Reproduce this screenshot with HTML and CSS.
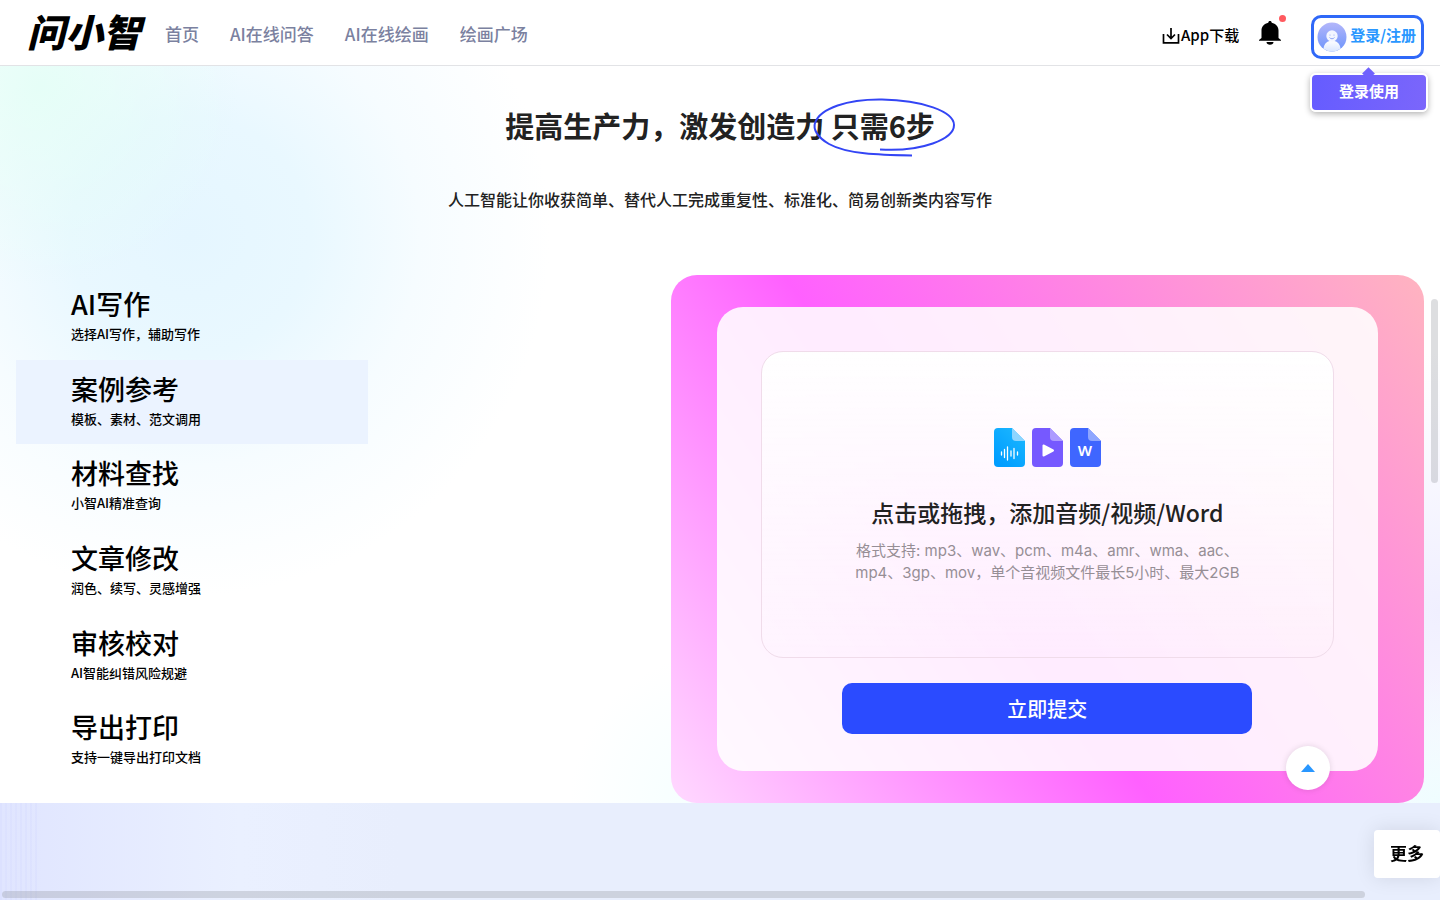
FILE: index.html
```html
<!DOCTYPE html>
<html lang="zh-CN">
<head>
  <meta charset="UTF-8" />
  <meta name="viewport" content="width=device-width, initial-scale=1.0"/>
  <title>问小智</title>
  <link rel="stylesheet" href="styles.css">
</head>
<body>
  <header class="header">
    <a class="logo" href="#">问小智</a>
    <nav class="nav">
      <a href="#">首页</a>
      <a href="#">AI在线问答</a>
      <a href="#">AI在线绘画</a>
      <a href="#">绘画广场</a>
    </nav>
    <div class="tools">
      <a class="download" href="#">
        <svg width="18" height="18" viewBox="0 0 18 18" fill="none" stroke="#000" stroke-width="1.7">
          <path d="M1.5 8v8.800h15V8M9 2v10M5 8.500l4 4 4-4"/>
        </svg>App下载
      </a>
      <button class="bell" type="button" aria-label="消息">
        <svg width="24" height="26" viewBox="0 0 24 26">
          <path d="M12 1c1 0 1.700.7 1.700 1.700 4 .8 6.800 3.800 6.800 7.800v7.500l2.500 2v.8H1V20l2.500-2v-7.500c0-4 2.800-7 6.800-7.800C10.300 1.700 11 1 12 1zM8.500 22h7c0 1.700-1.500 2.800-3.500 2.800S8.500 23.700 8.500 22z"/>
        </svg>
        <span class="dot"></span>
      </button>
      <div class="account">
        <button class="login" type="button">
          <svg width="30" height="30" viewBox="0 0 30 30">
            <defs>
              <linearGradient id="face" x1="0" y1="0" x2="0" y2="1">
                <stop offset="0" stop-color="#b3b6fa"/>
                <stop offset="1" stop-color="#6c94fb"/>
              </linearGradient>
              <linearGradient id="suit" x1="0" y1="0" x2="0" y2="1">
                <stop offset="0" stop-color="#fff"/>
                <stop offset="1" stop-color="#d9e6ff"/>
              </linearGradient>
            </defs>
            <circle cx="15" cy="15" r="14.500" fill="url(#face)"/>
            <path d="M6.500 26.700c.5-5.500 4-8 8.500-8s8 2.500 8.500 8a14.500 14.500 0 0 1-17 0z" fill="url(#suit)"/>
            <circle cx="15" cy="14" r="5.700" fill="#f3f6ff"/>
            <path d="M12.500 15.500c1.200 1.700 3.800 1.700 5 0" fill="none" stroke="#8fa6f5"/>
            <circle cx="13" cy="13" r=".6" fill="#8fa6f5"/>
            <circle cx="17" cy="13" r=".6" fill="#8fa6f5"/>
          </svg>
          <span>登录/注册</span>
        </button>
        <div class="tip">登录使用</div>
      </div>
    </div>
  </header>

  <main class="intro">
    <h1>提高生产力，激发创造力
      <span class="circled">只需6步
        <svg class="ring" width="144" height="60" viewBox="0 0 144 60" fill="none" stroke="#3345f5" stroke-width="2">
          <path d="M100 57.500C66 57 35 56 17 46 5 39 1 31 3 25 8 10 36 1 70 1.500c40 .5 72 12 72 25.500 0 14-32 27-74 24.500"/>
        </svg>
      </span>
    </h1>
    <p class="lead">人工智能让你收获简单、替代人工完成重复性、标准化、简易创新类内容写作</p>

    <div class="content">
      <ul class="steps">
        <li><a href="#"><strong>AI写作</strong><span>选择AI写作，辅助写作</span></a></li>
        <li><a class="active" href="#"><strong>案例参考</strong><span>模板、素材、范文调用</span></a></li>
        <li><a href="#"><strong>材料查找</strong><span>小智AI精准查询</span></a></li>
        <li><a href="#"><strong>文章修改</strong><span>润色、续写、灵感增强</span></a></li>
        <li><a href="#"><strong>审核校对</strong><span>AI智能纠错风险规避</span></a></li>
        <li><a href="#"><strong>导出打印</strong><span>支持一键导出打印文档</span></a></li>
      </ul>

      <section class="card">
        <div class="panel">
          <div class="drop">
            <div class="files">
              <svg width="31" height="39" viewBox="0 0 31 39">
                <defs>
                  <linearGradient id="audio" x1="1" y1="0" x2="0.300" y2="1">
                    <stop offset="0" stop-color="#1eb9ff"/>
                    <stop offset="1" stop-color="#009dff"/>
                  </linearGradient>
                </defs>
                <path d="M4 0h14l13 13v22a4 4 0 0 1-4 4H4a4 4 0 0 1-4-4V4a4 4 0 0 1 4-4z" fill="url(#audio)"/>
                <path d="M18 0l13 13h-9a4 4 0 0 1-4-4z" fill="#8dd5ff"/>
                <path d="M7.500 24v3M10.500 21.500v8M13.500 19v13M17 23v5M20 20.500v10M23.500 24v3" stroke="#fff" stroke-width="1.300" stroke-linecap="round"/>
              </svg>
              <svg width="31" height="39" viewBox="0 0 31 39">
                <path d="M4 0h14l13 13v22a4 4 0 0 1-4 4H4a4 4 0 0 1-4-4V4a4 4 0 0 1 4-4z" fill="#7659ff"/>
                <path d="M18 0l13 13h-9a4 4 0 0 1-4-4z" fill="#ad9bff"/>
                <path d="M11.500 17.500v10l9.500-5z" fill="#fff" stroke="#fff" stroke-width="2" stroke-linejoin="round"/>
              </svg>
              <svg width="31" height="39" viewBox="0 0 31 39">
                <path d="M4 0h14l13 13v22a4 4 0 0 1-4 4H4a4 4 0 0 1-4-4V4a4 4 0 0 1 4-4z" fill="#3f66ff"/>
                <path d="M18 0l13 13h-9a4 4 0 0 1-4-4z" fill="#8ea6ff"/>
                <text class="word" x="15" y="28" text-anchor="middle">W</text>
              </svg>
            </div>
            <h2>点击或拖拽，添加音频/视频/Word</h2>
            <p>格式支持: mp3、wav、pcm、m4a、amr、wma、aac、<br>mp4、3gp、mov，单个音视频文件最长5小时、最大2GB</p>
          </div>
          <button class="submit" type="button">立即提交</button>
        </div>
      </section>
    </div>
  </main>

  <section class="next"></section>

  <button class="to-top" type="button" aria-label="回到顶部">
    <svg width="14" height="8" viewBox="0 0 14 8"><path d="M7 0l7 8H0z" fill="#2997ff"/></svg>
  </button>
  <button class="more" type="button">更多</button>
  <div class="bar bar-y"></div>
  <div class="bar bar-x"></div>
</body>
</html>
```
FILE: styles.css
```css
* {
  box-sizing: border-box;
}

body {
  margin: 0;
  min-height: 100vh;
  display: flex;
  flex-direction: column;
  font-family: "Noto Sans CJK SC", sans-serif;
  font-weight: 500;
  color: #000;
  background: #fff;
}

a {
  color: inherit;
  text-decoration: none;
}

button {
  font: inherit;
  border: none;
  padding: 0;
  cursor: pointer;
}

/* header */
.header {
  display: flex;
  align-items: center;
  height: 66px;
  padding: 0 16px 0 27px;
  background: #fff;
  border-bottom: 1px solid #e2e3e6;
}

.logo {
  padding-bottom: 4px;
  font-size: 38px;
  font-weight: 900;
  font-style: italic;
  line-height: 60px;
}

.nav {
  display: flex;
  gap: 31px;
  margin-left: 24px;
  padding-top: 2px;
  font-size: 17px;
  line-height: 24px;
  color: #7b81a0;
}

.tools {
  display: flex;
  align-items: center;
  margin-left: auto;
}

.download {
  display: flex;
  align-items: center;
  gap: 1px;
  padding-top: 4px;
  font-size: 15px;
}

.bell {
  position: relative;
  display: flex;
  margin-left: 19px;
  background: none;
}

.dot {
  position: absolute;
  top: -5px;
  right: -4px;
  width: 7px;
  height: 7px;
  border-radius: 50%;
  background: #ff5a5f;
}

.account {
  position: relative;
  margin-left: 29px;
  padding-top: 8px;
}

.login {
  display: flex;
  align-items: center;
  gap: 3px;
  height: 44px;
  padding: 0 5px 0 3px;
  border: 3px solid #2f68f8;
  border-radius: 10px;
  background: #fff;
  color: #2997ff;
  font-size: 15px;
  font-weight: 700;
}

.login span {
  padding-bottom: 4px;
}

.tip {
  position: absolute;
  top: 66px;
  left: -1px;
  right: -4px;
  height: 39px;
  border: 2px solid #fff;
  border-radius: 6px;
  background: linear-gradient(100deg, #655cff, #7b66fb);
  box-shadow: 0 2px 6px rgba(0, 0, 0, 0.3);
  color: #fff;
  font-size: 15px;
  font-weight: 700;
  line-height: 32px;
  text-align: center;
}

.tip::before {
  content: "";
  position: absolute;
  top: -6px;
  left: 50%;
  width: 9px;
  height: 9px;
  margin-left: -5px;
  background: #6f61fd;
  transform: rotate(45deg);
}

/* intro */
.intro {
  padding: 35px 16px 0;
  background:
    radial-gradient(circle at 40px 20px, rgba(226, 255, 245, 0.8), rgba(226, 255, 245, 0) 200px),
    radial-gradient(circle at 190px 170px, #e5f6ff, #e9f8ff 120px, rgba(240, 250, 255, 0.6) 230px, rgba(255, 255, 255, 0) 360px),
    radial-gradient(circle at 100% 100%, #effdff, rgba(239, 253, 255, 0) 130px),
    radial-gradient(circle at 100% 74%, #f0efff, rgba(255, 255, 255, 0) 260px),
    radial-gradient(circle at 50% 100%, #f4ffff, rgba(255, 255, 255, 0) 150px),
    #fff;
}

h1 {
  margin: 0;
  font-size: 29px;
  font-weight: 700;
  line-height: 48px;
  text-align: center;
  color: #222;
}

.circled {
  position: relative;
}

.ring {
  position: absolute;
  top: -6px;
  left: -19px;
}

.lead {
  margin: 38px 0 0;
  font-size: 16px;
  line-height: 24px;
  text-align: center;
  color: #222;
}

.content {
  display: grid;
  grid-template-columns: 25% 53.5%;
  justify-content: space-between;
  margin-top: 64px;
}

.steps {
  display: grid;
  grid-auto-rows: 1fr;
  margin: 0;
  padding: 0 0 20px;
  list-style: none;
}

.steps a {
  display: flex;
  flex-direction: column;
  height: 100%;
  padding: 10px 16px 14px 55px;
}

.steps .active {
  background: #ebf3ff;
}

.steps strong {
  font-size: 27px;
  font-weight: 500;
  line-height: 38px;
}

.steps span {
  font-size: 13px;
  line-height: 22px;
}

.card {
  padding: 32px 46px;
  border-radius: 26px;
  background: linear-gradient(55deg, #ffd9ff, #ff60ff 43%, #ffb4c0);
}

.panel {
  display: flex;
  flex-direction: column;
  align-items: center;
  padding: 44px 44px 37px;
  border-radius: 26px;
  background: rgba(255, 255, 255, 0.88);
}

.drop {
  display: flex;
  flex-direction: column;
  align-items: center;
  width: 100%;
  padding: 76px 20px 73px;
  border: 1px solid #f0dcea;
  border-radius: 22px;
  background: linear-gradient(#fff, rgba(255, 255, 255, 0));
}

.files {
  display: flex;
  gap: 7px;
}

.word {
  font-family: "Noto Sans", sans-serif;
  font-size: 15px;
  font-weight: 600;
  fill: #fff;
}

.drop h2 {
  margin: 28px 0 11px;
  font-size: 23px;
  font-weight: 500;
  line-height: 34px;
  color: #222;
}

.drop p {
  margin: 0;
  font-family: Inter, "Noto Sans CJK SC", sans-serif;
  font-size: 15px;
  font-weight: 400;
  line-height: 22px;
  text-align: center;
  color: #968e95;
}

.submit {
  width: 410px;
  max-width: 100%;
  height: 51px;
  margin-top: 25px;
  border-radius: 10px;
  background: #2b4bff;
  color: #fff;
  font-size: 20px;
  font-weight: 500;
}

.next {
  flex: 1;
  background:
    repeating-linear-gradient(90deg, rgba(214, 219, 255, 0.4) 0 2px, transparent 2px 5px) 0 0 / 38px 100% no-repeat,
    linear-gradient(90deg, #e0e5ff, #eaf0ff 240px, #e8eefd 400px);
}

/* floating */
.to-top {
  position: fixed;
  right: 110px;
  bottom: 110px;
  display: flex;
  align-items: center;
  justify-content: center;
  width: 44px;
  height: 44px;
  border-radius: 50%;
  background: #fff;
  box-shadow: 0 0 6px rgba(0, 0, 0, 0.12);
}

.more {
  position: fixed;
  right: 0;
  bottom: 22px;
  width: 66px;
  height: 48px;
  padding-bottom: 3px;
  border-radius: 4px;
  background: #fff;
  box-shadow: 0 0 20px rgba(0, 0, 0, 0.1);
  font-size: 17px;
  font-weight: 700;
}

.bar {
  position: fixed;
  border-radius: 4px;
  background: rgba(144, 147, 153, 0.3);
}

.bar-y {
  top: 299px;
  right: 2px;
  width: 7px;
  height: 184px;
}

.bar-x {
  left: 2px;
  right: 75px;
  bottom: 2px;
  height: 7px;
}
```
